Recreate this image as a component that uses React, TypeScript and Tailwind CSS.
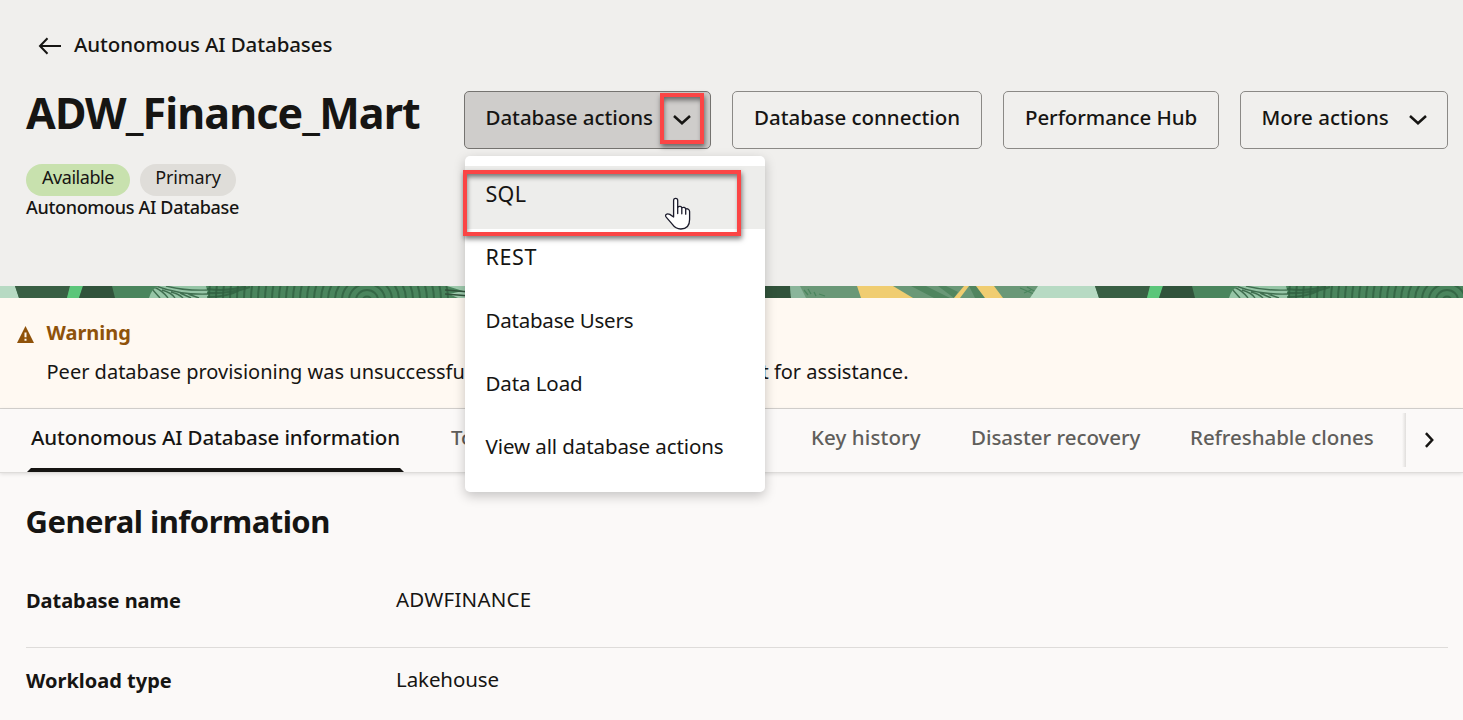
import type { ReactNode } from "react";

function ChevronDown() {
  return (
    <svg className="h-[10px] w-[18px] shrink-0" viewBox="0 0 18 10" fill="none" stroke="#161513" strokeWidth="2.5">
      <path d="M1 1L9 8.2L17 1" />
    </svg>
  );
}

function ActionButton({ className, children }: { className: string; children: ReactNode }) {
  return (
    <button
      className={`flex h-[58px] items-start rounded-[5px] border border-[#8b8986] pt-[11px] pl-[20.5px] text-left text-[20.5px] leading-7 font-medium whitespace-nowrap ${className}`}
    >
      {children}
    </button>
  );
}

function PatternTile({ x }: { x: number }) {
  const rings = Array.from({ length: 23 }, (_, i) => 4 + i * 7);
  return (
    <g transform={`translate(${x} 0)`}>
      <rect x="-2" width="1084" height="12" fill="#4a855d" />
      <path d="M-42 0H15L19 12H-50Z" fill="#b7dac3" />
      <path d="M15 0H70L67 12H19Z" fill="#395f44" />
      <path d="M70 0H83L79 12H67Z" fill="#5cc67a" />
      <path d="M83 0H112L115 12H79Z" fill="#31533b" />
      <path d="M158 0H206L209 12H149Q151 4 158 0Z" fill="#96c5a6" />
      <g clipPath="url(#fan)" fill="none" stroke="#3f6e4f" strokeWidth="1.4">
        <path d="M156 0Q180 9 208 8M166 0Q185 5 208 4M152 3L160 12M154 1Q163 5 168 12M162 4Q172 7 175 12M171 6Q179 8 183 12M180 7L191 12M188 8L199 12" />
      </g>
      <rect x="209" width="240" height="12" fill="#4a855d" />
      <g clipPath="url(#grain)" fill="none" stroke="#2f5f3f" strokeOpacity="0.75" strokeWidth="2">
        {rings.map((r) => (
          <ellipse key={r} cx="367" cy="14" rx={r} ry={r * 0.9} />
        ))}
        <path d="M207 3Q228 6 246 0M207 7Q230 8 250 1M207 11Q228 11 240 4" />
      </g>
      <path d="M447 0H475V12H458L449 8L463 5Z" fill="#9fcbae" />
      <path d="M445 4L470 6M445 8L470 10" stroke="#31533b" strokeWidth="1.4" />
      <rect x="600" width="450" height="12" fill="#6a9877" />
      <path d="M740 0H790L791 12H740Z" fill="#31533b" />
      <path d="M790 0H800L806 12H791Z" fill="#8ab59a" />
      <path d="M804 4L808 9M808 3L811 8M814 6L816 10M819 8L825 10" stroke="#4a855d" strokeWidth="1.3" />
      <path d="M857 0H893L913 12H861Z" fill="#f0cd71" />
      <path d="M911 0H926L950 12H934ZM938 0H946L958 6L954 12Z" fill="#50855f" />
      <path d="M964 0H969L960 12H954Z" fill="#f0cd71" />
      <path d="M969 0H976L985 12H975Z" fill="#50855f" />
      <path d="M976 0H994L1003 12H985Z" fill="#f0cd71" />
      <path d="M1020 2L1034 8M1027 1L1036 6M1024 7L1031 4" stroke="#4a855d" strokeWidth="1.3" />
      <path d="M1045 0H1084V12H1038Z" fill="#b7dac3" />
    </g>
  );
}

function PatternStrip() {
  return (
    <svg className="block h-3 w-full" viewBox="0 0 1463 12" preserveAspectRatio="none">
      <defs>
        <clipPath id="fan">
          <path d="M158 0H206L209 12H149Q151 4 158 0Z" />
        </clipPath>
        <clipPath id="grain">
          <rect x="207" width="242" height="12" />
        </clipPath>
      </defs>
      <PatternTile x={0} />
      <PatternTile x={1080} />
    </svg>
  );
}

function HandCursor() {
  return (
    <svg className="absolute top-[31px] left-[199px] h-[33px] w-[27px]" viewBox="-1 -1 27 33" fill="#fff" stroke="#1b1b2b" strokeWidth="1.3" strokeLinejoin="round" strokeLinecap="round">
      <path d="M8.6 19V2.4C8.6-.4 12.7-.4 12.7 2.4V9.3C14.2 7.8 16.4 8.3 16.8 9.8C18.4 8.8 20.4 9.4 20.7 11C22.6 10.3 24.6 11.4 24.6 13.6V21.5C24.6 27.5 21.5 31 15.8 31C11.8 31 9.4 29.3 7.2 26.2L1.4 19.4C-.8 17 1.8 14.8 4.8 16.4Z" />
      <path d="M12.7 9V15.5M16.8 10V15.8M20.7 11.3V16.2" fill="none" />
    </svg>
  );
}

const menuItems = [
  { label: "SQL", style: "text-[21.5px] tracking-[0.3px]" },
  { label: "REST", style: "text-[21.5px] tracking-[0.6px]" },
  { label: "Database Users", style: "tracking-[-0.22px]" },
  { label: "Data Load", style: "tracking-[-0.1px]" },
  { label: "View all database actions", style: "tracking-[-0.09px]" },
];

function ActionsMenu() {
  return (
    <div className="absolute top-[65px] left-px z-20 h-[336px] w-[300px] rounded-[5px] bg-white pt-[10px] shadow-[0_4px_12px_rgba(0,0,0,0.22)]">
      {menuItems.map((item, i) => (
        <div
          key={item.label}
          className={`relative h-[63px] pt-[14px] pl-[20.5px] text-[20.5px] leading-7 whitespace-nowrap ${i === 0 ? "bg-[#ededeb]" : ""}`}
        >
          <span className={item.style}>{item.label}</span>
          {i === 0 && <HandCursor />}
        </div>
      ))}
      <div className="absolute top-[14px] left-[-2px] h-[66px] w-[278px] border-4 border-[#fb4545] shadow-[1px_3px_5px_rgba(0,0,0,0.5),inset_1px_4px_5px_-1px_rgba(0,0,0,0.5)]" />
    </div>
  );
}

function Tab({ x = "", children }: { x?: string; children: ReactNode }) {
  return <span className={`shrink-0 whitespace-nowrap ${x}`}>{children}</span>;
}

export default function App() {
  return (
    <div className="flex h-[720px] w-[1463px] flex-col overflow-hidden bg-[#fbf9f8] font-['Noto_Sans','Open_Sans',sans-serif] text-[#161513]">
      <header className="h-[286px] shrink-0 bg-[#f0efed] pt-[30px] pl-[26px]">
        <a className="flex h-7 items-start pl-3">
          <svg className="mt-[7px] h-[18px] w-[24px]" viewBox="0 0 24 18" fill="none" stroke="#161513" strokeWidth="2">
            <path d="M23 9H2M9.5 1.2L2 9L9.5 16.8" />
          </svg>
          <span className="pl-3 text-[20.5px] leading-7 font-medium tracking-[-0.1px]">Autonomous AI Databases</span>
        </a>
        <div className="mt-[25px] flex h-14 items-start">
          <h1 className="w-[438px] pt-0.5 text-[43px] leading-[56px] font-bold tracking-[-0.88px] whitespace-nowrap">
            ADW_Finance_Mart
          </h1>
          <div className="flex gap-[21px] pt-2">
            <div className="relative">
              <ActionButton className="w-[247px] border-[#757370]! bg-[#cfcdcb] tracking-[-0.05px]">
                <span className="w-[187px]">Database actions</span>
                <span className="pt-[12px]">
                  <ChevronDown />
                </span>
              </ActionButton>
              <div className="absolute top-[2px] left-[196px] z-10 h-[51px] w-[44px] border-4 border-[#fb4545] shadow-[1px_3px_5px_rgba(0,0,0,0.5),inset_1px_4px_5px_-1px_rgba(0,0,0,0.5)]" />
              <ActionsMenu />
            </div>
            <ActionButton className="w-[250px] pl-[21px]! tracking-[-0.03px]">Database connection</ActionButton>
            <ActionButton className="w-[216px] pl-[21px]! tracking-[-0.1px]">Performance Hub</ActionButton>
            <ActionButton className="w-[208px]">
              <span className="w-[147px]">More actions</span>
              <span className="pt-[12px]">
                <ChevronDown />
              </span>
            </ActionButton>
          </div>
        </div>
        <div className="mt-[25px] flex gap-[10px] text-lg leading-7">
          <span className="flex h-8 w-[104px] justify-center rounded-full bg-[#c8e1ae] tracking-[-0.45px]">
            <span className="-mt-px">Available</span>
          </span>
          <span className="flex h-8 w-24 justify-center rounded-full bg-[#dfddd9] tracking-[-0.15px]">
            <span className="-mt-px">Primary</span>
          </span>
        </div>
        <p className="-mt-px text-lg leading-6 font-medium tracking-[-0.32px]">Autonomous AI Database</p>
      </header>

      <div className="h-3 shrink-0">
        <PatternStrip />
      </div>

      <section className="flex h-[111px] shrink-0 border-b border-[#d6d3d0] bg-[#fff9f2] pt-5 pl-[17px]">
        <svg className="mt-2 h-[17px] w-[17px]" viewBox="0 0 17 17">
          <path d="M8.5 0L17 17H0Z" fill="#8f520a" />
          <path d="M8.5 6.5V11.2M8.5 12.8V14.8" stroke="#fff9f2" strokeWidth="2" />
        </svg>
        <div className="pt-px pl-[12.5px]">
          <h2 className="text-xl leading-7 font-bold text-[#8f520a]">Warning</h2>
          <p className="mt-[11px] flex w-[862px] justify-between text-xl leading-7 whitespace-nowrap">
            <span>Peer database provisioning was unsuccessful.</span>
            <span>Please contact support for assistance.</span>
          </p>
        </div>
      </section>

      <nav className="z-10 flex h-16 shrink-0 border-b border-[#dedcda] bg-[#fbf9f8] text-[20.5px] leading-7 font-medium text-[#605e5b] shadow-[0_1px_4px_rgba(0,0,0,0.12)]">
        <div className="flex w-[1405px] pl-[27px]">
          <div className="flex w-[377px] shrink-0 flex-col justify-between pt-[14px] pl-1 whitespace-nowrap text-[#161513]">
            <span className="tracking-[-0.11px]">Autonomous AI Database information</span>
            <span className="-ml-1 block h-1 bg-[#161513] [clip-path:polygon(4px_0,calc(100%-4px)_0,100%_100%,0_100%)]" />
          </div>
          <div className="flex pt-[14px] pl-[47px]">
            <div className="flex w-[360px] shrink-0 gap-[50px]">
              <Tab>Tool configuration</Tab>
              <Tab>Backups</Tab>
            </div>
            <Tab x="w-[160px] tracking-[0.1px]">Key history</Tab>
            <Tab x="w-[219px] tracking-[-0.04px]">Disaster recovery</Tab>
            <Tab x="tracking-[-0.06px]">Refreshable clones</Tab>
          </div>
        </div>
        <button className="relative flex h-full flex-1 items-start pl-[20px]">
          <span className="absolute top-1 -left-[3px] h-[54px] w-[4px] bg-gradient-to-r from-transparent to-[#e0dedc]" />
          <svg className="mt-[23px] h-4 w-[9px]" viewBox="0 0 9 16" fill="none" stroke="#161513" strokeWidth="2.5">
            <path d="M.9 1.2L7.2 8L.9 14.8" />
          </svg>
        </button>
      </nav>

      <main className="pr-[15px] pl-[26px]">
        <h2 className="-ml-[0.5px] pt-7 text-[31px] leading-10 font-bold tracking-[-0.53px]">General information</h2>
        <dl className="mt-[27px]">
          <div className="flex h-20 border-b border-[#dedcda] text-[20.5px] leading-7">
            <dt className="w-[370px] pt-[19px] text-xl leading-7 font-bold tracking-[-0.05px]">Database name</dt>
            <dd className="pt-[17px] tracking-[0.22px]">ADWFINANCE</dd>
          </div>
          <div className="flex h-20 text-[20.5px] leading-7">
            <dt className="w-[370px] pt-[19px] text-xl leading-7 font-bold">Workload type</dt>
            <dd className="pt-[17px] tracking-[-0.1px]">Lakehouse</dd>
          </div>
        </dl>
      </main>
    </div>
  );
}
